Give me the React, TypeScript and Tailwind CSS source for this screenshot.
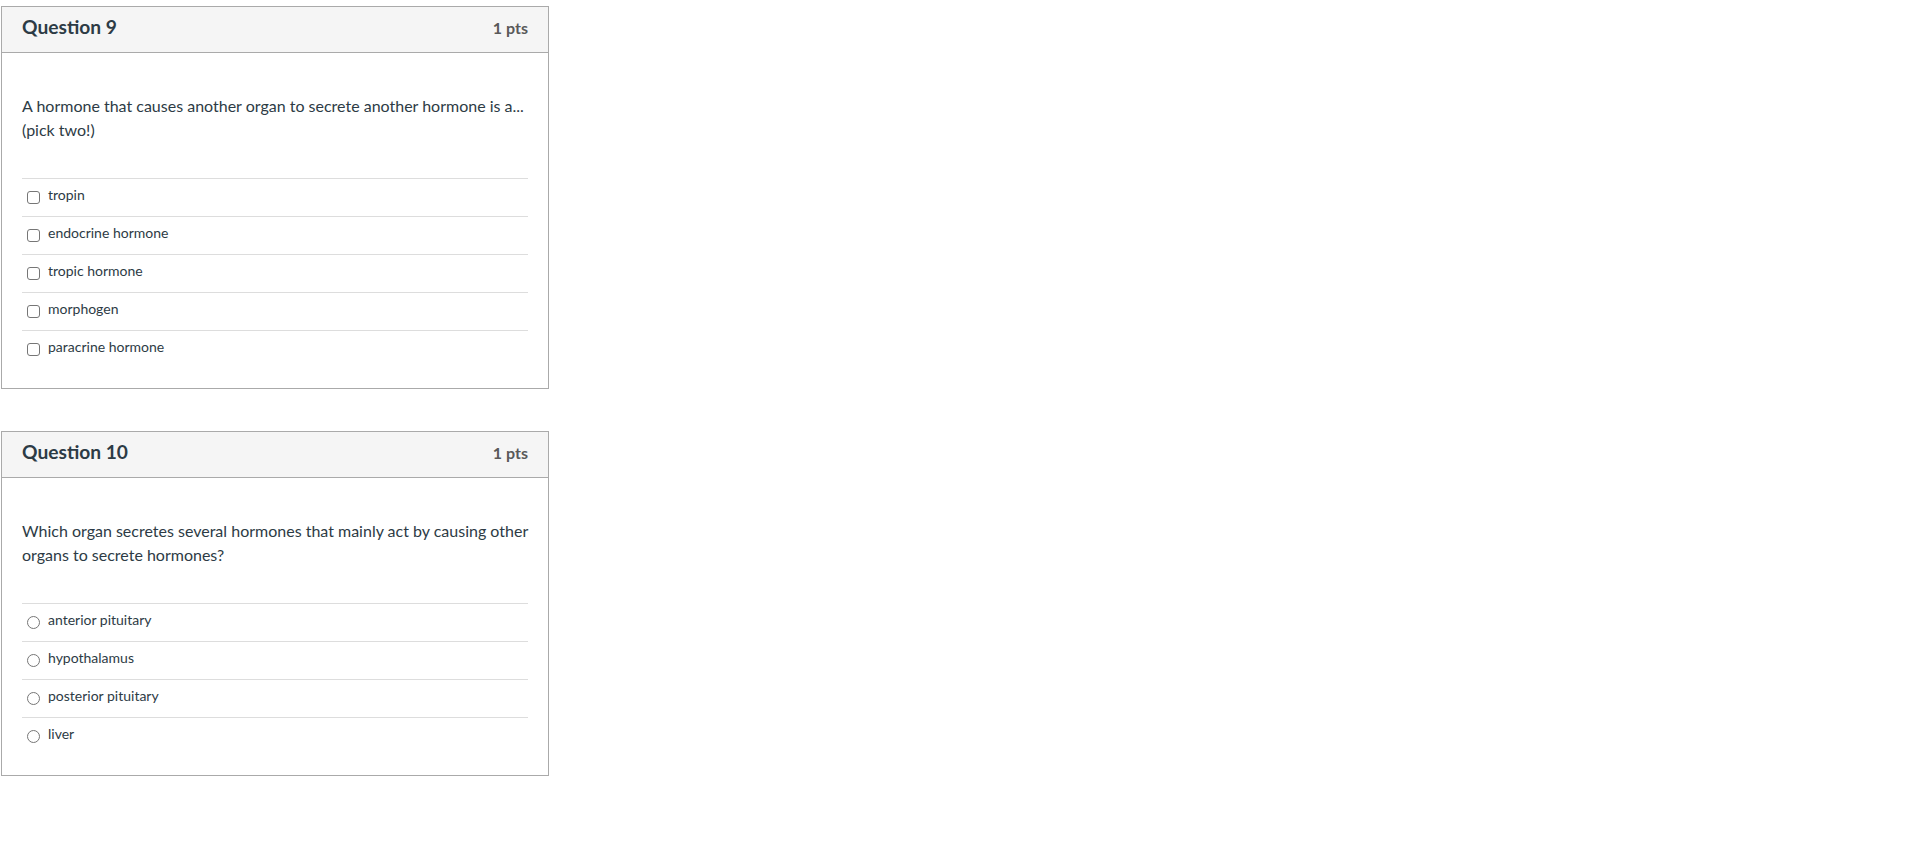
import React from "react";

type Q = {
  title: string;
  text: React.ReactNode;
  type: "checkbox" | "radio";
  answers: string[];
  name: string;
};

const questions: Q[] = [
  {
    title: "Question 9",
    text: (
      <>
        A hormone that causes another organ to secrete another hormone is a...
        <br />
        (pick two!)
      </>
    ),
    type: "checkbox",
    answers: ["tropin", "endocrine hormone", "tropic hormone", "morphogen", "paracrine hormone"],
    name: "q9",
  },
  {
    title: "Question 10",
    text: "Which organ secretes several hormones that mainly act by causing other organs to secrete hormones?",
    type: "radio",
    answers: ["anterior pituitary", "hypothalamus", "posterior pituitary", "liver"],
    name: "q10",
  },
];

function QuestionCard({ q }: { q: Q }) {
  return (
    <div className="w-[548px] border border-[#aaaaaa] bg-white">
      <div className="flex h-[46px] items-baseline justify-between border-b border-[#aaaaaa] bg-[#f5f5f5] px-[20px] pt-[8px]">
        <span className="text-[19.2px] font-bold leading-[24px] text-[#2d3b45]">{q.title}</span>
        <span className="text-[16px] font-bold leading-[24px] text-[#595959]">1 pts</span>
      </div>
      <div className="px-[20px] pt-[41px] pb-[20px]">
        <div className="-mr-[6px] text-[16px] leading-[24px] text-[#2d3b45]">{q.text}</div>
        <div className="mt-[36px]">
          {q.answers.map((a) => (
            <label
              key={a}
              className="flex h-[38px] items-start gap-[8px] border-t border-[#dddddd] pl-[5px] pt-[6px]"
            >
              <input
                type={q.type}
                name={q.name}
                className={
                  q.type === "checkbox"
                    ? "m-0 mt-[6px] h-[13px] w-[13px] shrink-0 appearance-none rounded-[3px] border border-[#767676] bg-white"
                    : "m-0 mt-[6px] h-[13px] w-[13px] shrink-0 appearance-none rounded-full border border-[#767676] bg-white"
                }
              />
              <span className="text-[14px] leading-[20px] text-[#2d3b45]">{a}</span>
            </label>
          ))}
        </div>
      </div>
    </div>
  );
}

export default function App() {
  return (
    <div
      className="min-h-screen bg-white pl-[1px] pt-[6px]"
      style={{ fontFamily: 'Lato, "Open Sans", "Liberation Sans", sans-serif' }}
    >
      <div className="flex flex-col gap-[42px]">
        {questions.map((q) => (
          <QuestionCard key={q.name} q={q} />
        ))}
      </div>
    </div>
  );
}
